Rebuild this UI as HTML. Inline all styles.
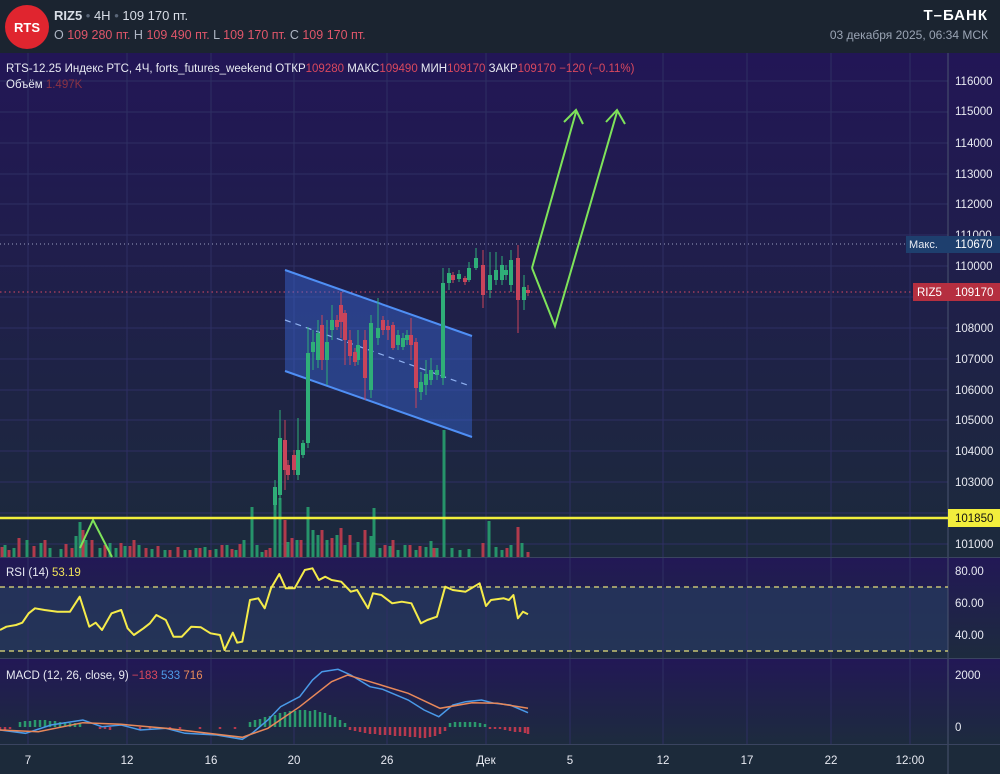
<!DOCTYPE html>
<html><head><meta charset="utf-8"><style>
html,body{margin:0;padding:0;width:1000px;height:774px;overflow:hidden;background:#1b2430;font-family:"Liberation Sans",sans-serif}
</style></head><body>
<svg width="1000" height="774" xmlns="http://www.w3.org/2000/svg" font-family="Liberation Sans, sans-serif">
<defs>
<linearGradient id="g1" x1="0" y1="0" x2="0" y2="1"><stop offset="0" stop-color="#221656"/><stop offset="1" stop-color="#1c2a3c"/></linearGradient>
<linearGradient id="g2" x1="0" y1="0" x2="0" y2="1"><stop offset="0" stop-color="#221856"/><stop offset="1" stop-color="#1d2b3e"/></linearGradient>
</defs>
<rect x="0" y="0" width="1000" height="53" fill="#1b2430"/>
<rect x="0" y="53" width="1000" height="504" fill="url(#g1)"/>
<rect x="0" y="558" width="1000" height="100" fill="url(#g2)"/>
<rect x="0" y="659" width="1000" height="85" fill="url(#g2)"/>
<rect x="0" y="745" width="1000" height="29" fill="#1c2a3a"/>
<rect x="0" y="587" width="948" height="64" fill="#26375c" opacity="0.8"/>
<g stroke="#2e2f63" stroke-width="1">
<line x1="28" y1="53" x2="28" y2="744"/><line x1="127" y1="53" x2="127" y2="744"/><line x1="211" y1="53" x2="211" y2="744"/><line x1="294" y1="53" x2="294" y2="744"/><line x1="387" y1="53" x2="387" y2="744"/><line x1="486" y1="53" x2="486" y2="744"/><line x1="570" y1="53" x2="570" y2="744"/><line x1="663" y1="53" x2="663" y2="744"/><line x1="747" y1="53" x2="747" y2="744"/><line x1="831" y1="53" x2="831" y2="744"/><line x1="910" y1="53" x2="910" y2="744"/>
<line x1="0" y1="81" x2="948" y2="81"/><line x1="0" y1="112" x2="948" y2="112"/><line x1="0" y1="143" x2="948" y2="143"/><line x1="0" y1="174" x2="948" y2="174"/><line x1="0" y1="204" x2="948" y2="204"/><line x1="0" y1="235" x2="948" y2="235"/><line x1="0" y1="266" x2="948" y2="266"/><line x1="0" y1="297" x2="948" y2="297"/><line x1="0" y1="328" x2="948" y2="328"/><line x1="0" y1="359" x2="948" y2="359"/><line x1="0" y1="390" x2="948" y2="390"/><line x1="0" y1="420" x2="948" y2="420"/><line x1="0" y1="451" x2="948" y2="451"/><line x1="0" y1="482" x2="948" y2="482"/><line x1="0" y1="513" x2="948" y2="513"/><line x1="0" y1="544" x2="948" y2="544"/>
</g>
<line x1="948" y1="53" x2="948" y2="774" stroke="#4a5470" stroke-width="1"/>
<line x1="0" y1="557.5" x2="1000" y2="557.5" stroke="#3a4460"/>
<line x1="0" y1="658.5" x2="1000" y2="658.5" stroke="#3a4460"/>
<line x1="0" y1="744.5" x2="1000" y2="744.5" stroke="#3a4460"/>
<!-- header -->
<circle cx="27" cy="27" r="22" fill="#e0252f"/>
<text x="27" y="32" font-size="13" font-weight="bold" fill="#fff" text-anchor="middle">RTS</text>
<text x="54" y="20" font-size="13" fill="#d8dde6"><tspan font-weight="bold">RIZ5</tspan><tspan fill="#5a6678"> • </tspan>4H<tspan fill="#5a6678"> • </tspan>109 170 пт.</text>
<text x="54" y="39" font-size="12.5" fill="#aeb6c4">O <tspan fill="#e0566a">109 280 пт.</tspan>  H <tspan fill="#e0566a">109 490 пт.</tspan>  L <tspan fill="#e0566a">109 170 пт.</tspan>  C <tspan fill="#e0566a">109 170 пт.</tspan></text>
<text x="988" y="20" font-size="15" font-weight="bold" fill="#fff" text-anchor="end" letter-spacing="1">Т–БАНК</text>
<text x="988" y="39" font-size="12" fill="#9aa4b4" text-anchor="end">03 декабря 2025, 06:34 МСК</text>
<text x="6" y="72" font-size="11.5" fill="#e8eaf2">RTS-12.25 Индекс РТС, 4Ч, forts_futures_weekend  ОТКР<tspan fill="#d9485e">109280</tspan>  МАКС<tspan fill="#d9485e">109490</tspan>  МИН<tspan fill="#d9485e">109170</tspan>  ЗАКР<tspan fill="#d9485e">109170</tspan>  <tspan fill="#d9485e">−120 (−0.11%)</tspan></text>
<text x="6" y="88" font-size="11.5" fill="#e8eaf2">Объём  <tspan fill="#8a3244">1.497K</tspan></text>
<!-- price axis -->
<g font-size="11.5" fill="#e8eaf2">
<text x="955" y="85">116000</text><text x="955" y="115">115000</text><text x="955" y="147">114000</text><text x="955" y="178">113000</text><text x="955" y="208">112000</text><text x="955" y="239">111000</text><text x="955" y="270">110000</text><text x="955" y="332">108000</text><text x="955" y="363">107000</text><text x="955" y="394">106000</text><text x="955" y="424">105000</text><text x="955" y="455">104000</text><text x="955" y="486">103000</text><text x="955" y="548">101000</text>
</g>
<line x1="0" y1="244" x2="906" y2="244" stroke="#9aa0c0" stroke-dasharray="1 3"/>
<rect x="906" y="236" width="42" height="17" fill="#1e3f6e"/><rect x="948" y="236" width="52" height="17" fill="#1e3f6e"/>
<text x="909" y="248" font-size="11" fill="#e8eaf2">Макс.</text><text x="955" y="248" font-size="11.5" fill="#fff">110670</text>
<line x1="0" y1="292" x2="913" y2="292" stroke="#d94a64" stroke-dasharray="1.5 3"/>
<rect x="913" y="283" width="35" height="18" fill="#b52f40"/><rect x="948" y="283" width="52" height="18" fill="#b52f40"/>
<text x="917" y="296" font-size="11.5" fill="#fff">RIZ5</text><text x="955" y="296" font-size="11.5" fill="#fff">109170</text>
<!-- volume -->
<path stroke="#26936a" stroke-width="3" fill="none" d="M5 557V545M14 557V548M27 557V540M41 557V543M50 557V548M61 557V549M76 557V536M80 557V522M86 557V540M100 557V548M110 557V543M116 557V548M125 557V546M139 557V545M152 557V549M165 557V550M185 557V550M196 557V548M205 557V547M216 557V549M227 557V545M236 557V550M244 557V540M252 557V507M257 557V545M262 557V552M275 557V490M280 557V498M288 557V542M297 557V540M308 557V507M313 557V530M318 557V535M327 557V540M337 557V535M345 557V545M358 557V542M371 557V536M374 557V508M380 557V548M390 557V546M398 557V550M405 557V545M416 557V550M426 557V547M431 557V541M437 557V548M444 557V430M452 557V548M460 557V550M469 557V549M489 557V521M496 557V547M502 557V550M511 557V545M522 557V543"/>
<path stroke="#b23a4c" stroke-width="3" fill="none" d="M2 557V547M9 557V550M19 557V538M34 557V546M45 557V540M66 557V544M72 557V548M83 557V530M92 557V540M105 557V545M121 557V543M130 557V546M134 557V540M146 557V548M158 557V546M170 557V550M178 557V547M190 557V550M200 557V548M210 557V550M222 557V545M232 557V549M240 557V544M266 557V550M270 557V548M285 557V520M292 557V538M301 557V540M322 557V530M332 557V538M341 557V528M350 557V535M365 557V530M385 557V545M393 557V540M410 557V545M420 557V546M434 557V548M483 557V543M507 557V548M518 557V527M528 557V552"/>
<polyline points="80,548 93,520 112,557" fill="none" stroke="#7ee35a" stroke-width="2"/>
<line x1="0" y1="518" x2="948" y2="518" stroke="#f2ee3c" stroke-width="2.5"/>
<rect x="948" y="509" width="52" height="18" fill="#f2ee3c"/><text x="955" y="522" font-size="11.5" fill="#111">101850</text>
<!-- channel -->
<polygon points="285,270 472,336 472,437 285,371" fill="#3a6be0" opacity="0.42"/>
<line x1="285" y1="270" x2="472" y2="336" stroke="#4f8ff5" stroke-width="2"/>
<line x1="285" y1="371" x2="472" y2="437" stroke="#4f8ff5" stroke-width="2"/>
<line x1="285" y1="320" x2="470" y2="386" stroke="#8fb0f0" stroke-width="1.2" stroke-dasharray="6 5"/>
<!-- candles -->
<g stroke="#2fae78" stroke-width="1"><path d="M275 480V510M280 410V500M298 418V480M303 440V458M308 327V448M313 330V370M318 320V368M327 320V385M332 305V340M358 330V365M371 315V398M378 298V345M398 330V350M403 333V350M407 330V345M421 372V400M426 360V395M431 358V385M437 365V380M443 268V385M449 268V290M459 270V282M469 262V282M476 248V270M490 252V298M496 252V285M502 256V285M506 265V280M511 250V292M524 275V310"/></g>
<g fill="#2fae78"><rect x="273" y="487" width="4" height="18"/><rect x="278" y="438" width="4" height="57"/><rect x="296" y="450" width="4" height="25"/><rect x="301" y="443" width="4" height="12"/><rect x="306" y="353" width="4" height="90"/><rect x="311" y="342" width="4" height="10"/><rect x="316" y="333" width="4" height="27"/><rect x="325" y="342" width="4" height="18"/><rect x="330" y="320" width="4" height="10"/><rect x="356" y="345" width="4" height="15"/><rect x="369" y="323" width="4" height="67"/><rect x="376" y="328" width="4" height="10"/><rect x="396" y="335" width="4" height="10"/><rect x="401" y="338" width="4" height="9"/><rect x="405" y="335" width="4" height="5"/><rect x="419" y="382" width="4" height="10"/><rect x="424" y="374" width="4" height="11"/><rect x="429" y="370" width="4" height="10"/><rect x="435" y="370" width="4" height="5"/><rect x="441" y="283" width="4" height="95"/><rect x="447" y="273" width="4" height="10"/><rect x="457" y="274" width="4" height="5"/><rect x="467" y="268" width="4" height="12"/><rect x="474" y="258" width="4" height="10"/><rect x="488" y="275" width="4" height="15"/><rect x="494" y="270" width="4" height="10"/><rect x="500" y="265" width="4" height="15"/><rect x="504" y="270" width="4" height="5"/><rect x="509" y="260" width="4" height="25"/><rect x="522" y="287" width="4" height="13"/></g>
<g stroke="#c9445a" stroke-width="1"><path d="M285 420V490M288 460V480M294 450V475M322 315V370M337 315V330M341 292V338M345 310V365M350 330V365M355 348V366M365 330V400M383 316V335M388 320V340M393 322V350M411 318V360M416 338V408M453 272V283M465 276V285M483 250V308M518 245V333M528 285V296"/></g>
<g fill="#c9445a"><rect x="283" y="440" width="4" height="30"/><rect x="286" y="465" width="4" height="10"/><rect x="292" y="455" width="4" height="15"/><rect x="320" y="325" width="4" height="35"/><rect x="335" y="320" width="4" height="7"/><rect x="339" y="305" width="4" height="17"/><rect x="343" y="313" width="4" height="27"/><rect x="348" y="340" width="4" height="16"/><rect x="353" y="352" width="4" height="10"/><rect x="363" y="340" width="4" height="38"/><rect x="381" y="320" width="4" height="10"/><rect x="386" y="326" width="4" height="4"/><rect x="391" y="325" width="4" height="23"/><rect x="409" y="335" width="4" height="10"/><rect x="414" y="342" width="4" height="46"/><rect x="451" y="275" width="4" height="5"/><rect x="463" y="278" width="4" height="4"/><rect x="481" y="265" width="4" height="30"/><rect x="516" y="258" width="4" height="42"/><rect x="526" y="290" width="4" height="3"/></g>
<!-- arrows -->
<g fill="none" stroke="#7ee35a" stroke-width="2" stroke-linejoin="miter">
<polyline points="532,268 576,112"/><polyline points="564,122 576,110 583,124"/>
<polyline points="532,268 555,326 617,112"/><polyline points="606,122 617,110 625,124"/>
</g>
<!-- RSI -->
<line x1="0" y1="587" x2="948" y2="587" stroke="#e8e07a" stroke-width="1.3" stroke-dasharray="5 4"/>
<line x1="0" y1="651" x2="948" y2="651" stroke="#e8e07a" stroke-width="1.3" stroke-dasharray="5 4"/>
<text x="6" y="576" font-size="11.5" fill="#e8eaf2">RSI (14)  <tspan fill="#f2e45a">53.19</tspan></text>
<text x="955" y="575" font-size="11.5" fill="#e8eaf2">80.00</text><text x="955" y="607" font-size="11.5" fill="#e8eaf2">60.00</text><text x="955" y="639" font-size="11.5" fill="#e8eaf2">40.00</text>
<polyline fill="none" stroke="#f5eb4a" stroke-width="2" stroke-linejoin="round" points="0,630 6.4,626.7 16,625 22.3,622.7 28.7,613.3 35,608.3 44.6,610 57.4,611.7 70,611.7 79.7,596.7 89.3,626.7 95.7,622.7 102,630 111.6,613.3 121.2,610 127.6,628.3 133.9,635 143.5,628.3 149.9,623.3 156.3,615 165.8,620 173.5,636.7 181.8,636.7 191.3,626.7 200.9,627.3 210.5,633.3 220,635 224.5,650 232.8,632.7 237.2,642.7 242.3,641.7 250,600 258.3,598.3 264.7,608.3 271,588.3 279.3,574 285.7,588.3 294.6,588.3 304.8,570 312.5,568.3 318.9,580 325.3,576.7 331.6,580 341.2,581.7 350.8,591.7 357.1,590 368,608.3 373,593.3 381.4,595 392.2,603.3 401.8,601.7 411.4,603.3 420.9,623.3 427.3,620 436.9,616.7 445.2,586.7 452.8,590 465.6,591.7 479.6,583.3 486,606 491,600 503.8,598.3 508.9,600 513.4,595 517.9,618.3 523,611.7 528,614.3"/>
<!-- MACD -->
<text x="6" y="679" font-size="11.5" fill="#e8eaf2">MACD (12, 26, close, 9)  <tspan fill="#d9485e">−183</tspan>  <tspan fill="#4f9be8">533</tspan>  <tspan fill="#e88a5a">716</tspan></text>
<text x="955" y="679" font-size="11.5" fill="#e8eaf2">2000</text><text x="955" y="731" font-size="11.5" fill="#e8eaf2">0</text>
<path stroke="#2a9a6c" stroke-width="2.5" d="M20 727V722M25 727V721M30 727V721M35 727V720M40 727V720M45 727V720M50 727V721M55 727V721M60 727V722M65 727V722M70 727V723M75 727V723M80 727V724M250 727V722M255 727V720M260 727V719M265 727V717M270 727V716M275 727V715M280 727V713M285 727V712M290 727V711M295 727V711M300 727V710M305 727V710M310 727V711M315 727V710M320 727V712M325 727V713M330 727V715M335 727V717M340 727V720M345 727V723M450 727V723M455 727V722M460 727V722M465 727V722M470 727V722M475 727V722M480 727V723M485 727V724"/>
<path stroke="#b8384e" stroke-width="2.5" d="M0 727V730M5 727V730M10 727V729M100 727V729M105 727V729M110 727V730M140 727V730M150 727V729M170 727V729M180 727V729M200 727V729M220 727V729M235 727V729M350 727V730M355 727V731M360 727V732M365 727V733M370 727V734M375 727V734M380 727V735M385 727V735M390 727V735M395 727V736M400 727V736M405 727V736M410 727V737M415 727V737M420 727V738M425 727V738M430 727V737M435 727V736M440 727V734M445 727V731M490 727V729M495 727V729M500 727V729M505 727V730M510 727V731M515 727V732M520 727V732M525 727V733M528 727V734"/>
<polyline fill="none" stroke="#4a9ae8" stroke-width="1.5" points="0,730 25.5,733.3 51,725 82.9,720 102,726.7 121.2,725 140.3,730 165.8,728.3 185,733.3 216.8,735 242.3,739.3 252,733.3 267.9,720 280.6,706.7 299.7,696.7 312.5,680 322,671.7 338,669.3 350.8,675 370,686.7 382.7,689.3 408.2,700 424.1,710 438.8,716.7 452.8,705 465.6,701.7 481.5,700 494.3,703.3 510.2,705 528,712.7"/>
<polyline fill="none" stroke="#e8885a" stroke-width="1.5" points="0,730 38.3,731.7 82.9,722.7 121.2,724.3 165.8,728.3 242.3,737.3 267.9,728.3 299.7,706.7 331.6,681.7 347.6,675 370,681.7 408.2,693.3 440,708.3 472,702.7 497.4,703.3 528,708.3"/>
<!-- time axis -->
<g font-size="11.5" fill="#e8eaf2" text-anchor="middle">
<text x="28" y="764">7</text><text x="127" y="764">12</text><text x="211" y="764">16</text><text x="294" y="764">20</text><text x="387" y="764">26</text><text x="486" y="764">Дек</text><text x="570" y="764">5</text><text x="663" y="764">12</text><text x="747" y="764">17</text><text x="831" y="764">22</text><text x="910" y="764">12:00</text>
</g>
</svg>
</body></html>
